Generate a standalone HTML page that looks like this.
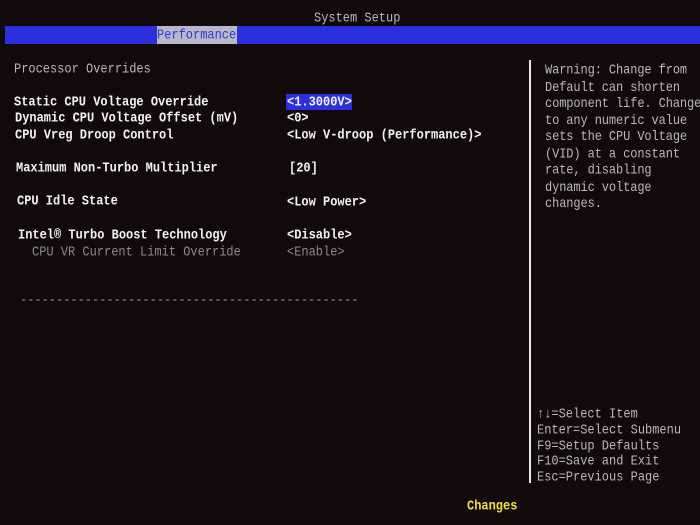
<!DOCTYPE html>
<html><head><style>
body{margin:0;width:700px;height:525px;background:#120a0a;overflow:hidden;position:relative;font-family:"Liberation Mono",monospace;font-size:12px;}
.t{position:absolute;white-space:pre;line-height:14px;transform:scaleY(1.15);transform-origin:left center;}
.m{transform-origin:left top;}
.w{color:#f2f2f8;font-weight:bold}
.g{color:#b8b8bc}
.d{color:#8a8a90}
</style></head><body>
<div class="t g" style="left:314px;top:11px;">System Setup</div>
<div style="position:absolute;left:5px;top:26px;width:695px;height:18px;background:#2b30dc"></div>
<div style="position:absolute;left:157px;top:26px;width:80px;height:18px;background:#b8b8c8"></div>
<div class="t" style="left:157px;top:28px;color:#3038d8">Performance</div>
<div style="position:absolute;left:529px;top:60px;width:2px;height:423px;background:#e8e8ee"></div>

<div class="t g" style="left:14px;top:62px">Processor Overrides</div>
<div class="t w" style="left:14px;top:95px">Static CPU Voltage Override</div>
<div style="position:absolute;left:286px;top:94px;width:66px;height:16px;background:#2b30dc"></div>
<div class="t w" style="left:287px;top:95px">&lt;1.3000V&gt;</div>
<div class="t w" style="left:15px;top:111px">Dynamic CPU Voltage Offset (mV)</div>
<div class="t w" style="left:287px;top:111px">&lt;0&gt;</div>
<div class="t w" style="left:15px;top:128px">CPU Vreg Droop Control</div>
<div class="t w" style="left:287px;top:128px">&lt;Low V-droop (Performance)&gt;</div>
<div class="t w" style="left:16px;top:161px">Maximum Non-Turbo Multiplier</div>
<div class="t w" style="left:289px;top:161px">[20]</div>
<div class="t w" style="left:17px;top:194px">CPU Idle State</div>
<div class="t w" style="left:287px;top:195px">&lt;Low Power&gt;</div>
<div class="t w" style="left:18px;top:228px">Intel® Turbo Boost Technology</div>
<div class="t w" style="left:287px;top:228px">&lt;Disable&gt;</div>
<div class="t d" style="left:32px;top:245px">CPU VR Current Limit Override</div>
<div class="t d" style="left:287px;top:245px">&lt;Enable&gt;</div>
<div class="t d" style="left:20px;top:293px">-----------------------------------------------</div>

<div class="t g m" style="left:545px;top:62px;line-height:14.5px;letter-spacing:-0.1px">Warning: Change from
Default can shorten
component life. Change
to any numeric value
sets the CPU Voltage
(VID) at a constant
rate, disabling
dynamic voltage
changes.</div>
<div class="t g m" style="left:537px;top:407px;line-height:13.8px">↑↓=Select Item
Enter=Select Submenu
F9=Setup Defaults
F10=Save and Exit
Esc=Previous Page</div>
<div class="t" style="left:467px;top:499px;color:#f0e040;font-weight:bold">Changes</div>
</body></html>
